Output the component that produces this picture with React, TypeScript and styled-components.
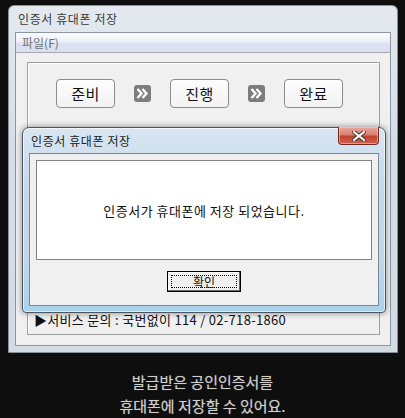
import React from "react";
import styled, { createGlobalStyle } from "styled-components";

const GlobalStyle = createGlobalStyle`
  html, body { margin: 0; padding: 0; background: #0e0e0e; }
  body { font-family: "Noto Sans CJK KR", "Noto Sans", sans-serif; }
`;

const Page = styled.div`
  position: relative;
  width: 405px;
  height: 418px;
  overflow: hidden;
  background: #0e0e0e;
  padding: 5px 0 0 8px;
  box-sizing: border-box;
`;

const Window = styled.div`
  width: 390px;
  height: 348px;
  box-sizing: border-box;
  border: 1px solid #8a9098;
  border-radius: 6px 6px 0 0;
  background: linear-gradient(180deg, #e3e9ef 0%, #d5dee7 40%, #d3dce5 100%);
  padding: 0 6px 6px 6px;
  display: flex;
  flex-direction: column;
`;

const TitleBar = styled.div`
  height: 26px;
  line-height: 26px;
  font-size: 12px;
  letter-spacing: 0.6px;
  color: #3a3a3a;
  padding-left: 3px;
`;

const Client = styled.div`
  flex: 1;
  border: 1px solid #8b96a2;
  background: #f0f0f0;
  display: flex;
  flex-direction: column;
`;

const MenuBar = styled.div`
  height: 19px;
  line-height: 19px;
  font-size: 12px;
  color: #6e6e6e;
  padding-left: 6px;
  background: linear-gradient(180deg, #fbfbfd 0%, #eef0f8 45%, #dde2f2 55%, #dbe0f1 100%);
  border-bottom: 1px solid #a5a9b6;
`;

const Content = styled.div`
  flex: 1;
  display: flex;
  padding: 9px 10px 10px 11px;
`;

const GroupBox = styled.div`
  flex: 1;
  border: 1px solid #a0a0a0;
  box-shadow: inset 1px 1px 0 #ffffff;
  display: flex;
  flex-direction: column;
  justify-content: space-between;
  padding: 16px 0 5px 6px;
`;

const StepRow = styled.div`
  display: flex;
  align-items: center;
  justify-content: center;
  gap: 19px;
  padding-right: 14px;
`;

const StepButton = styled.div`
  width: 59px;
  height: 29px;
  box-sizing: border-box;
  border: 1px solid #8c8c8c;
  border-radius: 4px;
  background: linear-gradient(180deg, #fdfdfd, #f2f2f2);
  display: flex;
  align-items: center;
  justify-content: center;
  font-size: 15px;
  letter-spacing: 0.5px;
  color: #111;
`;

const Status = styled.div`
  font-size: 13px;
  letter-spacing: 0.3px;
  color: #111;
  line-height: 18px;
`;

const Dialog = styled.div`
  position: absolute;
  left: 22px;
  top: 127px;
  width: 364px;
  height: 186px;
  box-sizing: border-box;
  border: 1px solid #4c5661;
  border-radius: 7px 7px 4px 4px;
  background: linear-gradient(180deg, #d9e6f2 0%, #c6d9ec 30%, #c2d6ea 70%, #a9d3ec 100%);
  box-shadow: 0 0 6px rgba(0, 0, 0, 0.45), inset 0 0 0 1px rgba(255, 255, 255, 0.6);
  padding: 0 6px 6px 6px;
  display: flex;
  flex-direction: column;
`;

const DialogTitle = styled.div`
  height: 25px;
  line-height: 25px;
  font-size: 12px;
  letter-spacing: 0.6px;
  color: #222;
  padding-left: 2px;
`;

const CloseButton = styled.div`
  position: absolute;
  right: 6px;
  top: -1px;
  width: 41px;
  height: 18px;
  box-sizing: border-box;
  border: 1px solid #6e2a22;
  border-top: none;
  border-radius: 0 0 4px 4px;
  background: linear-gradient(180deg, #e9aa9e 0%, #d9806f 45%, #c2412c 55%, #d1644f 100%);
  box-shadow: inset 0 0 0 1px rgba(255, 210, 200, 0.5);
  display: flex;
  align-items: center;
  justify-content: center;
`;

const DialogClient = styled.div`
  flex: 1;
  border: 1px solid #7a8794;
  background: #f0f0f0;
  padding: 6px 6px 0 6px;
  display: flex;
  flex-direction: column;
  align-items: center;
`;

const MessageBox = styled.div`
  align-self: stretch;
  height: 100px;
  box-sizing: border-box;
  border: 1px solid #828282;
  background: #ffffff;
  display: flex;
  align-items: center;
  justify-content: center;
  font-size: 13px;
  letter-spacing: 0.5px;
  color: #111;
`;

const OkButton = styled.div`
  margin-top: 11px;
  width: 74px;
  height: 21px;
  box-sizing: border-box;
  border: 1px solid #000;
  box-shadow: inset -1px -1px 0 #696969, inset 1px 1px 0 #ffffff;
  background: #f0f0f0;
  padding: 3px;
  display: flex;
`;

const FocusRect = styled.div`
  flex: 1;
  border: 1px dotted #000;
  display: flex;
  align-items: center;
  justify-content: center;
  font-size: 12px;
  line-height: 12px;
  color: #111;
`;

const Footer = styled.div`
  padding-top: 17px;
  padding-right: 8px;
  text-align: center;
  font-size: 15px;
  line-height: 24px;
  color: #cfcfcf;
  text-shadow: 0 0 1px rgba(255, 255, 255, 0.4);
`;

const ArrowIcon = () => (
  <svg width="17" height="17" viewBox="0 0 17 17">
    <rect x="0" y="0" width="17" height="17" rx="3" fill="#7d7d7d" />
    <polyline points="3.5,4 7.5,8.5 3.5,13" fill="none" stroke="#fff" strokeWidth="2.4" />
    <polyline points="8.5,4 12.5,8.5 8.5,13" fill="none" stroke="#fff" strokeWidth="2.4" />
  </svg>
);

const CloseIcon = () => (
  <svg width="14" height="10" viewBox="0 0 14 10">
    <path d="M2,1 L12,9 M12,1 L2,9" stroke="#3b3b3b" strokeWidth="4" strokeLinecap="square" />
    <path d="M2,1 L12,9 M12,1 L2,9" stroke="#ffffff" strokeWidth="2" strokeLinecap="square" />
  </svg>
);

export default function App() {
  return (
    <>
      <GlobalStyle />
      <Page>
        <Window>
          <TitleBar>인증서 휴대폰 저장</TitleBar>
          <Client>
            <MenuBar>파일(F)</MenuBar>
            <Content>
              <GroupBox>
                <StepRow>
                  <StepButton>준비</StepButton>
                  <ArrowIcon />
                  <StepButton>진행</StepButton>
                  <ArrowIcon />
                  <StepButton>완료</StepButton>
                </StepRow>
                <Status>▶서비스 문의 : 국번없이 114 / 02-718-1860</Status>
              </GroupBox>
            </Content>
          </Client>
        </Window>
        <Footer>
          발급받은 공인인증서를
          <br />
          휴대폰에 저장할 수 있어요.
        </Footer>
        <Dialog>
          <DialogTitle>인증서 휴대폰 저장</DialogTitle>
          <CloseButton>
            <CloseIcon />
          </CloseButton>
          <DialogClient>
            <MessageBox>인증서가 휴대폰에 저장 되었습니다.</MessageBox>
            <OkButton>
              <FocusRect>확인</FocusRect>
            </OkButton>
          </DialogClient>
        </Dialog>
      </Page>
    </>
  );
}
